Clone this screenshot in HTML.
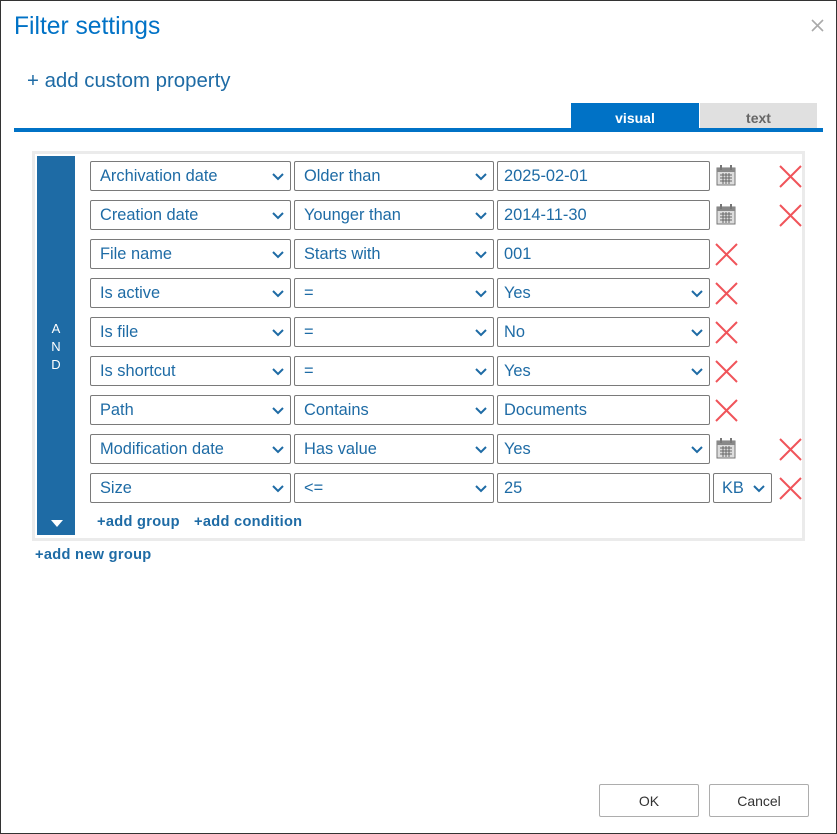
<!DOCTYPE html><html><head><style>
*{box-sizing:border-box;margin:0;padding:0}
body{width:837px;height:834px;background:#fff;font-family:"Liberation Sans",Arial,sans-serif;position:relative;overflow:hidden}
.frame{position:absolute;left:0;top:0;width:837px;height:834px;border:1px solid #333}
.a{position:absolute}
.f{position:absolute;height:30px;border:1px solid #7a7a7a;border-radius:2px;color:#1e6ba5;font-size:16.4px;line-height:29px;padding-left:9px;background:#fff}
.f svg{position:absolute;right:6px;top:11px}
.lnk{position:absolute;color:#1e6ba5;font-weight:bold;font-size:14.6px;letter-spacing:0.3px}
.btn{position:absolute;top:784px;width:100px;height:33px;border:1px solid #adadad;border-radius:2px;font-size:14px;text-align:center;line-height:32px;color:#333;background:#fff}
</style></head><body>
<div class="frame"></div>
<div class="a" style="left:14px;top:13px;font-size:24.6px;color:#0072c6">Filter settings</div>
<svg class="a" style="left:811px;top:19px" width="13" height="13"><path d="M1 1L12 12M12 1L1 12" stroke="#aaa" stroke-width="1.6"/></svg>
<div class="a" style="left:27px;top:70px;font-size:20.4px;color:#1e6ba5">+ add custom property</div>
<div class="a" style="left:571px;top:103px;width:128px;height:26px;background:#0072c6;color:#fff;font-weight:bold;font-size:14px;text-align:center;line-height:31px">visual</div>
<div class="a" style="left:700px;top:103px;width:117px;height:25px;background:#e0e0e0;color:#666;font-weight:bold;font-size:14px;text-align:center;line-height:31px">text</div>
<div class="a" style="left:14px;top:128px;width:809px;height:4px;background:#0072c6"></div>
<div class="a" style="left:32px;top:151px;width:773px;height:390px;border:3px solid #ebebeb"></div>
<div class="a" style="left:37px;top:156px;width:38px;height:379px;background:#1e6ba5;color:#fff;font-size:13px;text-align:center;line-height:18px;padding-top:164px">A<br>N<br>D</div>
<svg class="a" style="left:51px;top:520px" width="12" height="7"><path d="M0 0H12L6 7Z" fill="#fff"/></svg>
<div id="rows"></div>
<div class="lnk" style="left:97px;top:514px">+add group</div>
<div class="lnk" style="left:194px;top:514px">+add condition</div>
<div class="lnk" style="left:35px;top:547px">+add new group</div>
<div class="btn" style="left:599px">OK</div>
<div class="btn" style="left:709px">Cancel</div>
<script>
var chev='<svg width="12" height="8"><path d="M1 1L6 6L11 1" stroke="#1e6ba5" stroke-width="2" fill="none"/></svg>';
var cal=function(x,y){return '<svg class="a" style="left:'+x+'px;top:'+y+'px" width="22" height="22"><rect x="2" y="4" width="18" height="17" fill="#ddd" stroke="#777"/><rect x="2" y="4" width="18" height="4" fill="#888"/><path d="M5 11H17M5 14H17M5 17H17M8 9V20M11 9V20M14 9V20" stroke="#666" stroke-width="1"/><rect x="5" y="1" width="2" height="5" fill="#777"/><rect x="15" y="1" width="2" height="5" fill="#777"/></svg>'};
var x=function(l,t){return '<svg class="a" style="left:'+l+'px;top:'+t+'px" width="23" height="23"><path d="M1 1L22 22M22 1L1 22" stroke="#f0545a" stroke-width="2"/></svg>'};
var R=[["Archivation date","Older than","2025-02-01",0,"cal"],["Creation date","Younger than","2014-11-30",0,"cal"],["File name","Starts with","001",0,""],["Is active","=","Yes",1,""],["Is file","=","No",1,""],["Is shortcut","=","Yes",1,""],["Path","Contains","Documents",0,""],["Modification date","Has value","Yes",1,"cal"],["Size","<=","25",0,"kb"]];
var h='';
R.forEach(function(r,i){var t=161+i*39;
h+='<div class="f" style="left:90px;top:'+t+'px;width:201px">'+r[0]+chev+'</div>';
h+='<div class="f" style="left:294px;top:'+t+'px;width:200px">'+r[1].replace("<","&lt;")+chev+'</div>';
h+='<div class="f" style="left:497px;top:'+t+'px;width:213px;padding-left:6px">'+r[2]+(r[3]?chev:'')+'</div>';
if(r[4]=="cal"){h+=cal(715,t+3)+x(779,t+4)}
else if(r[4]=="kb"){h+='<div class="f" style="left:713px;top:'+t+'px;width:59px;padding-left:8px">KB'+chev+'</div>'+x(779,t+4)}
else h+=x(715,t+4);
});
document.getElementById('rows').innerHTML=h;
</script>
</body></html>
